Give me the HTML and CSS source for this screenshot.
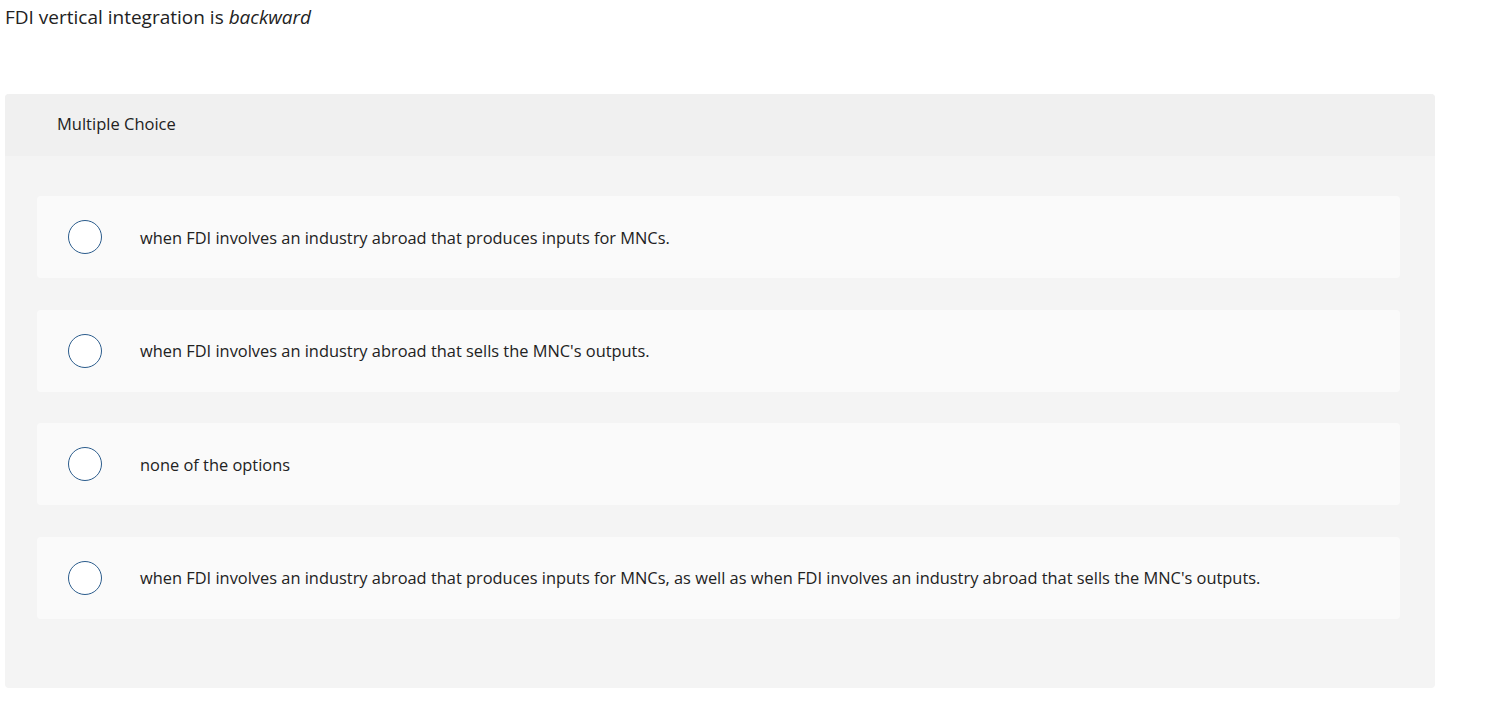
FILE: index.html
```html
<!DOCTYPE html>
<html>
<head>
<meta charset="utf-8">
<link rel="stylesheet" href="styles.css">
</head>
<body>
<p class="prompt">FDI vertical integration is <em>backward</em></p>
<div class="card">
  <div class="card-header">Multiple Choice</div>
  <div class="card-body">
    <div class="option"><span class="radio"></span><span class="label">when FDI involves an industry abroad that produces inputs for MNCs.</span></div>
    <div class="option"><span class="radio"></span><span class="label">when FDI involves an industry abroad that sells the MNC's outputs.</span></div>
    <div class="option"><span class="radio"></span><span class="label">none of the options</span></div>
    <div class="option"><span class="radio"></span><span class="label">when FDI involves an industry abroad that produces inputs for MNCs, as well as when FDI involves an industry abroad that sells the MNC's outputs.</span></div>
  </div>
</div>
</body>
</html>
```
FILE: styles.css
```css
html, body {
  margin: 0;
  padding: 0;
  background: #fff;
}
body {
  font-family: "Open Sans", Roboto, sans-serif;
  color: #222;
}
.prompt {
  margin: 0;
  padding: 5px 0 0 5px;
  font-size: 19px;
  line-height: 24px;
  height: 94px;
  box-sizing: border-box;
}
.prompt em {
  font-style: italic;
}
.card {
  margin-left: 5px;
  width: 1430px;
  border-radius: 4px;
  overflow: hidden;
  background: #f4f4f4;
}
.card-header {
  background: #f0f0f0;
  height: 62px;
  box-sizing: border-box;
  padding-left: 52px;
  padding-bottom: 3px;
  display: flex;
  align-items: center;
  font-size: 16.5px;
  color: #222;
}
.card-body {
  padding: 40px 35px 69px 32px;
  display: flex;
  flex-direction: column;
  gap: 31.67px;
}
.option {
  background: #fafafa;
  border-radius: 4px;
  height: 82px;
  display: flex;
  align-items: center;
  padding-left: 31px;
}
.radio {
  width: 32px;
  height: 32px;
  border: 1.7px solid #2b5c8c;
  border-radius: 50%;
  background: #fff;
  flex: none;
}
.label {
  margin-left: 38px;
  font-size: 16.4px;
  color: #222;
}
```
